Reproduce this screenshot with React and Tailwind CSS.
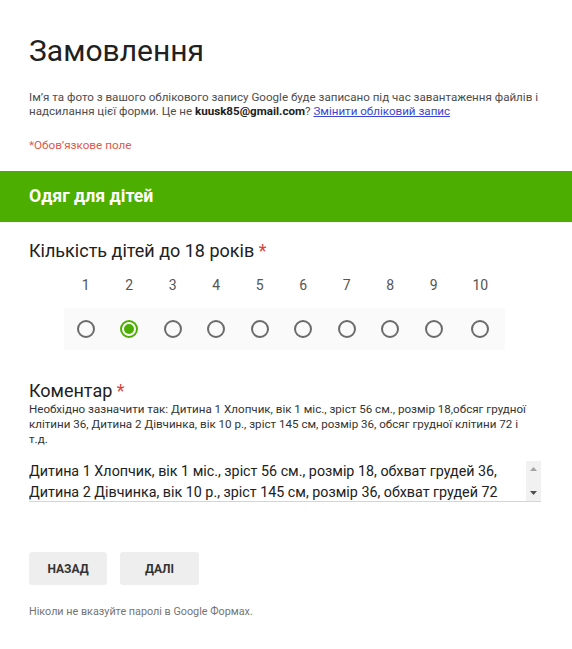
import React from 'react';

// Google Forms page — "Замовлення"
const SCALE = [1, 2, 3, 4, 5, 6, 7, 8, 9, 10];

const Radio = ({ checked }) => (
    <span
        className={`w-[18px] h-[18px] rounded-full border-2 flex items-center justify-center ${
            checked ? 'border-[#4caf00]' : 'border-[#6b6b6b]'
        }`}
    >
        {checked && <span className="w-[10px] h-[10px] rounded-full bg-[#4caf00]" />}
    </span>
);

export default function App() {
    return (
        <div className="w-[572px] h-[649px] bg-white text-[#212121] font-['Roboto','Noto_Sans',sans-serif] overflow-hidden">
            <div className="px-[29px] pt-[31px]">
                <h1 className="text-[30px] leading-[40px] font-normal text-[#212121]">Замовлення</h1>
                <p className="mt-[19px] text-[11.6px] leading-[14px] text-[#4d4d4d] whitespace-nowrap">
                    <span className="block">Ім’я та фото з вашого облікового запису Google буде записано під час завантаження файлів і</span>
                    <span className="block">
                        надсилання цієї форми. Це не <b className="font-bold text-[#212121]">kuusk85@gmail.com</b>?{' '}
                        <span className="text-[#3b44d8] underline">Змінити обліковий запис</span>
                    </span>
                </p>
                <p className="mt-[20px] text-[11.7px] leading-[14px] text-[#e0574b]">*Обов’язкове поле</p>
            </div>

            <div className="mt-[19px] h-[51px] bg-[#4caf00] px-[29px] flex items-center">
                <span className="text-white text-[17.7px] font-bold">Одяг для дітей</span>
            </div>

            <div className="px-[29px]">
                <div className="mt-[18px] text-[18px] leading-[22px]">
                    Кількість дітей до 18 років <span className="text-[#db4437]">*</span>
                </div>

                <div className="ml-[35px] w-[441px] mt-[13px]">
                    <div className="flex h-[20px] items-center text-[14px] text-[#555]">
                        {SCALE.map(n => (
                            <span key={n} className={`flex justify-center ${n === 10 ? 'flex-1' : 'w-[43.5px]'}`}>{n}</span>
                        ))}
                    </div>
                    <div className="mt-[13px] h-[42px] bg-[#fafafa] flex items-center">
                        {SCALE.map(n => (
                            <span key={n} className={`flex justify-center ${n === 10 ? 'flex-1' : 'w-[43.5px]'}`}>
                                <Radio checked={n === 2} />
                            </span>
                        ))}
                    </div>
                </div>

                <div className="mt-[30px] text-[18px] leading-[22px]">
                    Коментар <span className="text-[#db4437]">*</span>
                </div>
                <p className="text-[11.6px] leading-[15px] text-[#333] whitespace-nowrap">
                    <span className="block">Необхідно зазначити так: Дитина 1 Хлопчик, вік 1 міс., зріст 56 см., розмір 18,обсяг грудної</span>
                    <span className="block">клітини 36, Дитина 2 Дівчинка, вік 10 р., зріст 145 см, розмір 36, обсяг грудної клітини 72 і</span>
                    <span className="block">т.д.</span>
                </p>

                <div className="mt-[14px] w-[512px] h-[41px] border-b border-[#d5d5d5] flex">
                    <div className="flex-1 text-[14.3px] leading-[21px] text-[#212121] overflow-hidden whitespace-nowrap">
                        <div>Дитина 1 Хлопчик, вік 1 міс., зріст 56 см., розмір 18, обхват грудей 36,</div>
                        <div>Дитина 2 Дівчинка, вік 10 р., зріст 145 см, розмір 36, обхват грудей 72</div>
                    </div>
                    <div className="w-[15px] bg-[#f1f1f1] flex flex-col justify-between items-center py-[6px]">
                        <svg width="7" height="4" viewBox="0 0 7 4"><path d="M0 4 L3.5 0 L7 4 Z" fill="#a3a3a3" /></svg>
                        <svg width="7" height="4" viewBox="0 0 7 4"><path d="M0 0 L3.5 4 L7 0 Z" fill="#505050" /></svg>
                    </div>
                </div>

                <div className="mt-[50px] flex gap-[13px]">
                    <button type="button" className="w-[78px] h-[33px] rounded-[3px] bg-[#eeeeee] text-[12px] font-bold text-[#333]">НАЗАД</button>
                    <button type="button" className="w-[79px] h-[33px] rounded-[3px] bg-[#eeeeee] text-[12px] font-bold text-[#333]">ДАЛІ</button>
                </div>

                <p className="mt-[21px] text-[10.8px] leading-[12px] text-[#757575]">Ніколи не вказуйте паролі в Google Формах.</p>
            </div>
        </div>
    );
}
